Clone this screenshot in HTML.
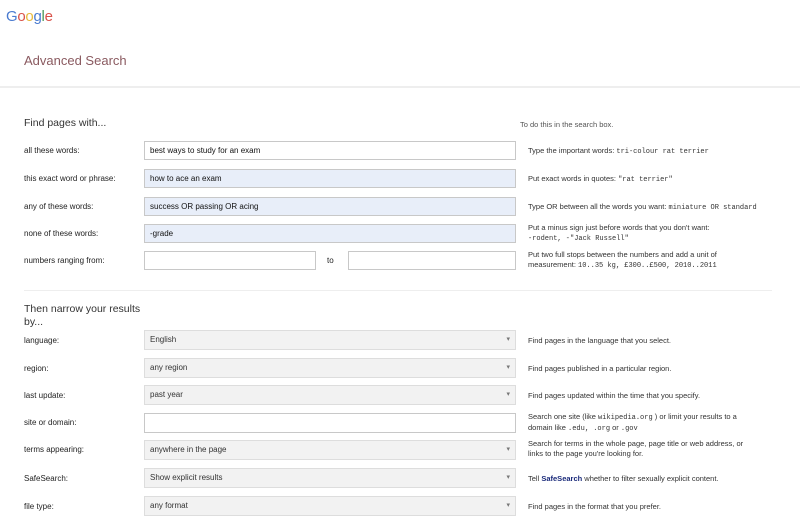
<!DOCTYPE html>
<html><head><meta charset="utf-8">
<style>
*{margin:0;padding:0;box-sizing:border-box}
body{width:800px;height:516px;background:#fff;font-family:"Liberation Sans",sans-serif;position:relative;overflow:hidden;color:#222}
.a{position:absolute;white-space:nowrap}
.lbl{font-size:8px;color:#222;left:24px}
.hint{font-size:7.5px;color:#333;left:528px;line-height:10px}
.m{font-family:"Liberation Mono",monospace;font-size:7px}
.in{position:absolute;left:144px;width:372px;height:19px;border:1px solid #c8c8c8;background:#fff;font-size:8px;padding-left:5px;line-height:17px;color:#111}
.blue{background:#e8eef9}
.sel{position:absolute;left:144px;width:372px;height:20px;border:1px solid #ddd;background:#f2f2f2;font-size:8px;padding-left:5px;line-height:18px;color:#333}
.sel:after{content:"▾";position:absolute;right:5px;top:0;font-size:7px;color:#777}
</style></head><body>
<div class="a" style="left:6px;top:8px;font-size:15px;letter-spacing:-0.3px"><span style="color:#4a7bd0">G</span><span style="color:#d9534a">o</span><span style="color:#e8b93a">o</span><span style="color:#4a7bd0">g</span><span style="color:#4a9a5a">l</span><span style="color:#d9534a">e</span></div>
<div class="a" style="left:24px;top:53px;font-size:13px;color:#8a5a60">Advanced Search</div>
<div class="a" style="left:0;top:86px;width:800px;height:2px;background:#eee"></div>

<div class="a" style="left:24px;top:117px;font-size:10.5px;color:#333">Find pages with...</div>
<div class="a" style="left:520px;top:120px;font-size:7.5px;color:#555">To do this in the search box.</div>

<div class="a lbl" style="top:146px">all these words:</div>
<div class="in" style="top:141px">best ways to study for an exam</div>
<div class="a hint" style="top:146px">Type the important words: <span class="m">tri-colour rat terrier</span></div>

<div class="a lbl" style="top:174px">this exact word or phrase:</div>
<div class="in blue" style="top:169px">how to ace an exam</div>
<div class="a hint" style="top:174px">Put exact words in quotes: <span class="m">"rat terrier"</span></div>

<div class="a lbl" style="top:202px">any of these words:</div>
<div class="in blue" style="top:197px">success OR passing OR acing</div>
<div class="a hint" style="top:202px">Type OR between all the words you want: <span class="m">miniature OR standard</span></div>

<div class="a lbl" style="top:229px">none of these words:</div>
<div class="in blue" style="top:224px">-grade</div>
<div class="a hint" style="top:223px">Put a minus sign just before words that you don't want:<br><span class="m">-rodent, -"Jack Russell"</span></div>

<div class="a lbl" style="top:256px">numbers ranging from:</div>
<div class="in" style="top:251px;width:172px"></div>
<div class="a" style="left:327px;top:256px;font-size:8px">to</div>
<div class="in" style="top:251px;left:348px;width:168px"></div>
<div class="a hint" style="top:250px">Put two full stops between the numbers and add a unit of<br>measurement: <span class="m">10..35 kg, £300..£500, 2010..2011</span></div>

<div class="a" style="left:24px;top:290px;width:748px;height:1px;background:#eee"></div>
<div class="a" style="left:24px;top:303px;font-size:10.5px;color:#333;line-height:13px;white-space:normal;width:120px">Then narrow your results by...</div>

<div class="a lbl" style="top:336px">language:</div>
<div class="sel" style="top:330px">English</div>
<div class="a hint" style="top:336px">Find pages in the language that you select.</div>

<div class="a lbl" style="top:364px">region:</div>
<div class="sel" style="top:358px">any region</div>
<div class="a hint" style="top:364px">Find pages published in a particular region.</div>

<div class="a lbl" style="top:391px">last update:</div>
<div class="sel" style="top:385px">past year</div>
<div class="a hint" style="top:391px">Find pages updated within the time that you specify.</div>

<div class="a lbl" style="top:418px">site or domain:</div>
<div class="in" style="top:413px;height:20px"></div>
<div class="a hint" style="top:412px">Search one site (like <span class="m">wikipedia.org</span> ) or limit your results to a<br>domain like <span class="m">.edu, .org</span> or <span class="m">.gov</span></div>

<div class="a lbl" style="top:445px">terms appearing:</div>
<div class="sel" style="top:440px">anywhere in the page</div>
<div class="a hint" style="top:439px">Search for terms in the whole page, page title or web address, or<br>links to the page you're looking for.</div>

<div class="a lbl" style="top:474px">SafeSearch:</div>
<div class="sel" style="top:468px">Show explicit results</div>
<div class="a hint" style="top:474px">Tell <b style="color:#1a2a7a">SafeSearch</b> whether to filter sexually explicit content.</div>

<div class="a lbl" style="top:502px">file type:</div>
<div class="sel" style="top:496px">any format</div>
<div class="a hint" style="top:502px">Find pages in the format that you prefer.</div>
</body></html>
